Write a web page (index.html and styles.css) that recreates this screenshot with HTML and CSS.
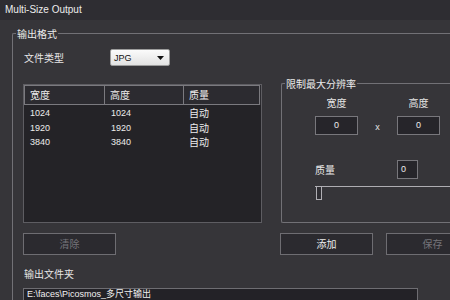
FILE: index.html
```html
<!DOCTYPE html>
<html lang="zh">
<head>
<meta charset="utf-8">
<link rel="stylesheet" href="styles.css">
</head>
<body>
<div class="titlebar">Multi-Size Output</div>
<div class="frame">
  <div class="group outer">
    <span class="legend">输出格式</span>
    <div class="content">
      <div class="format-row">
        <span class="format-label">文件类型</span>
        <div class="select">
          <span>JPG</span>
          <svg class="arrow" width="7" height="4" viewBox="0 0 7 4"><path d="M0 0H7L3.5 4Z" fill="#111"/></svg>
        </div>
      </div>
      <div class="middle">
        <div class="table">
          <div class="thead">
            <div class="th">宽度</div>
            <div class="th">高度</div>
            <div class="th">质量</div>
          </div>
          <div class="tbody">
            <div class="tr"><span>1024</span><span>1024</span><span class="cjk">自动</span></div>
            <div class="tr"><span>1920</span><span>1920</span><span class="cjk">自动</span></div>
            <div class="tr"><span>3840</span><span>3840</span><span class="cjk">自动</span></div>
          </div>
        </div>
        <div class="group limit">
          <span class="legend">限制最大分辨率</span>
          <div class="dims">
            <span class="dim-label">宽度</span>
            <span></span>
            <span class="dim-label">高度</span>
            <div class="input center">0</div>
            <span class="times">x</span>
            <div class="input center">0</div>
          </div>
          <div class="quality">
            <span class="q-label">质量</span>
            <span></span>
            <div class="input small">0</div>
          </div>
          <div class="slider">
            <div class="track"></div>
            <div class="handle"></div>
          </div>
        </div>
      </div>
      <div class="buttons">
        <div class="btn disabled">清除</div>
        <div class="btn add">添加</div>
        <div class="btn disabled save">保存</div>
      </div>
      <div class="folder-label">输出文件夹</div>
      <div class="path">E:\faces\Picosmos_多尺寸输出</div>
    </div>
  </div>
</div>
</body>
</html>
```
FILE: styles.css
```css
* { box-sizing: border-box; margin: 0; padding: 0; }
body {
  width: 450px;
  height: 300px;
  overflow: hidden;
  background: #363539;
  color: #e6e6e6;
  font-family: "Noto Sans CJK SC", sans-serif;
  font-size: 10px;
}
.titlebar {
  height: 20px;
  background: #2e2d32;
  font-family: "Liberation Sans", sans-serif;
  font-size: 10px;
  line-height: 20px;
  padding-left: 5px;
  color: #ececec;
}
.frame { padding: 13px 0 0 12px; }
.group {
  position: relative;
  border: 1px solid #727176;
  border-radius: 2px;
}
.legend {
  position: absolute;
  top: -8px;
  left: 3px;
  padding: 0 1px;
  background: #363539;
  line-height: 15px;
  color: #ececec;
}
.outer {
  width: 438px;
  height: 267px;
  border-right: none;
  border-bottom: none;
  border-radius: 2px 0 0 0;
}
.content {
  height: 100%;
  overflow: hidden;
  padding: 15px 0 0 10px;
}
.format-row {
  display: flex;
  align-items: center;
  height: 17px;
}
.format-label {
  width: 87px;
  padding-left: 1px;
}
.select {
  width: 60px;
  height: 17px;
  display: flex;
  align-items: center;
  justify-content: space-between;
  padding: 0 5px 0 3px;
  background: linear-gradient(#fbfbfb, #e2e2e2);
  border: 1px solid #9c9c9c;
  border-radius: 2px;
  color: #111;
  font-family: "Liberation Sans", sans-serif;
  font-size: 9px;
}
.middle {
  display: flex;
  align-items: flex-end;
  padding-top: 8px;
  margin-top: 9px;
}
.table {
  width: 239px;
  height: 139px;
  flex: none;
  border: 1px solid #5e5d62;
  background: #242327;
}
.thead {
  display: grid;
  grid-template-columns: 81px 79px 76px;
  height: 20px;
  background: #2c2b30;
}
.th {
  border: 1px solid #7b7a7f;
  padding-left: 5px;
  line-height: 17px;
  color: #ececec;
}
.th + .th { border-left: none; }
.tbody { padding-top: 1px; }
.tr {
  display: grid;
  grid-template-columns: 81px 79px 76px;
  line-height: 14.5px;
  font-family: "Liberation Sans", sans-serif;
  font-size: 9px;
  color: #ececec;
}
.tr span { padding-left: 6px; }
.tr .cjk { font-family: "Noto Sans CJK SC", sans-serif; font-size: 10px; padding-left: 5px; }
.limit {
  flex: 1;
  height: 140px;
  margin-left: 19px;
  border-right: none;
  border-top-right-radius: 0;
  border-bottom-right-radius: 0;
  padding: 11px 0 0 33px;
}
.dims {
  display: grid;
  grid-template-columns: 43px 39px 43px;
  row-gap: 5px;
  align-items: center;
}
.dim-label {
  text-align: center;
  line-height: 16px;
}
.input {
  height: 19px;
  background: #26252a;
  border: 1px solid #78777c;
  font-family: "Liberation Sans", sans-serif;
  font-size: 9px;
  line-height: 17px;
  color: #ececec;
}
.input.center { text-align: center; }
.input.small { width: 21px; padding-left: 3px; }
.times {
  text-align: center;
  font-family: "Liberation Sans", sans-serif;
  font-size: 9px;
  padding-top: 3px;
}
.quality {
  display: grid;
  grid-template-columns: 43px 39px 43px;
  align-items: center;
  margin-top: 25px;
}
.slider {
  position: relative;
  margin-top: 7px;
  height: 14px;
}
.track {
  margin-top: 6px;
  height: 1px;
  background: #aeadb2;
}
.handle {
  position: absolute;
  top: 0;
  left: 1px;
  width: 6px;
  height: 14px;
  border: 1px solid #b0afb4;
  background: #2f2e33;
}
.buttons {
  display: flex;
  margin-top: 10px;
}
.btn {
  flex: none;
  width: 93px;
  height: 22px;
  border: 1px solid #6e6d72;
  background: #2b2a2f;
  text-align: center;
  line-height: 20px;
  color: #ececec;
}
.btn.disabled { color: #75747a; }
.btn.add { margin-left: 164px; }
.btn.save { margin-left: 13px; }
.folder-label {
  margin-top: 11px;
  line-height: 16px;
  padding-left: 1px;
}
.path {
  margin-top: 6px;
  width: 395px;
  height: 20px;
  border: 1px solid #6e6d72;
  background: #232227;
  padding-left: 3px;
  font-family: "Liberation Sans", "Noto Sans CJK SC", sans-serif;
  font-size: 9px;
  line-height: 11px;
  color: #f0f0f0;
}
```
